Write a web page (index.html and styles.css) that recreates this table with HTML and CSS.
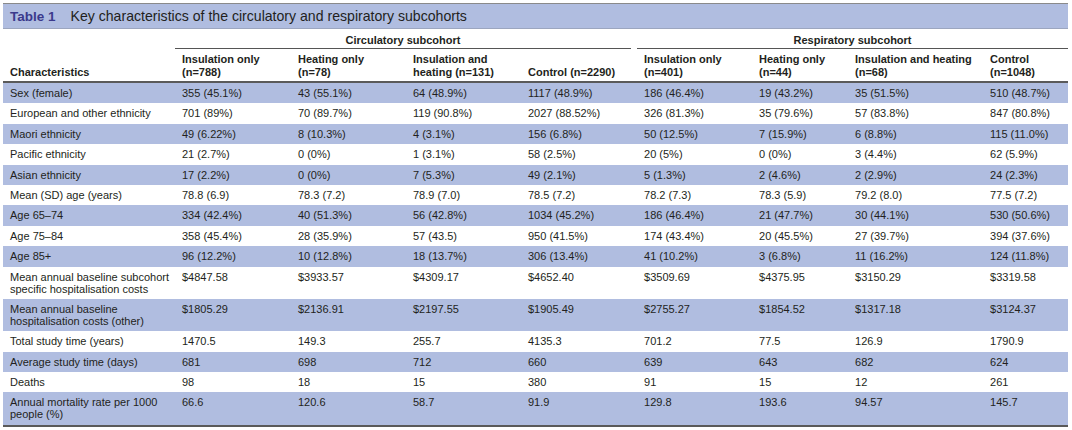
FILE: index.html
```html
<!DOCTYPE html>
<html lang="en">
<head>
<meta charset="utf-8">
<title>Table 1</title>
<link rel="stylesheet" href="styles.css">
</head>
<body>
<div class="wrap">
  <div class="title"><span class="label">Table 1</span>Key characteristics of the circulatory and respiratory subcohorts</div>
  <table class="tbl">
    <colgroup>
      <col class="c0"><col class="c1"><col class="c2"><col class="c3"><col class="c4"><col class="c5"><col class="c6"><col class="c7"><col class="c8">
    </colgroup>
    <thead>
      <tr class="grp-row">
        <th></th>
        <th colspan="4" class="grp"><div class="grp-line grp-left">Circulatory subcohort</div></th>
        <th colspan="4" class="grp"><div class="grp-line">Respiratory subcohort</div></th>
      </tr>
      <tr class="col-row">
        <th>Characteristics</th>
        <th>Insulation only<br>(n=788)</th>
        <th>Heating only (n=78)</th>
        <th>Insulation and<br>heating (n=131)</th>
        <th>Control (n=2290)</th>
        <th>Insulation only<br>(n=401)</th>
        <th>Heating only<br>(n=44)</th>
        <th>Insulation and heating<br>(n=68)</th>
        <th>Control<br>(n=1048)</th>
      </tr>
    </thead>
    <tbody>
      <tr class="alt"><td>Sex (female)</td><td>355 (45.1%)</td><td>43 (55.1%)</td><td>64 (48.9%)</td><td>1117 (48.9%)</td><td>186 (46.4%)</td><td>19 (43.2%)</td><td>35 (51.5%)</td><td>510 (48.7%)</td></tr>
      <tr><td>European and other ethnicity</td><td>701 (89%)</td><td>70 (89.7%)</td><td>119 (90.8%)</td><td>2027 (88.52%)</td><td>326 (81.3%)</td><td>35 (79.6%)</td><td>57 (83.8%)</td><td>847 (80.8%)</td></tr>
      <tr class="alt"><td>Maori ethnicity</td><td>49 (6.22%)</td><td>8 (10.3%)</td><td>4 (3.1%)</td><td>156 (6.8%)</td><td>50 (12.5%)</td><td>7 (15.9%)</td><td>6 (8.8%)</td><td>115 (11.0%)</td></tr>
      <tr><td>Pacific ethnicity</td><td>21 (2.7%)</td><td>0 (0%)</td><td>1 (3.1%)</td><td>58 (2.5%)</td><td>20 (5%)</td><td>0 (0%)</td><td>3 (4.4%)</td><td>62 (5.9%)</td></tr>
      <tr class="alt"><td>Asian ethnicity</td><td>17 (2.2%)</td><td>0 (0%)</td><td>7 (5.3%)</td><td>49 (2.1%)</td><td>5 (1.3%)</td><td>2 (4.6%)</td><td>2 (2.9%)</td><td>24 (2.3%)</td></tr>
      <tr><td>Mean (SD) age (years)</td><td>78.8 (6.9)</td><td>78.3 (7.2)</td><td>78.9 (7.0)</td><td>78.5 (7.2)</td><td>78.2 (7.3)</td><td>78.3 (5.9)</td><td>79.2 (8.0)</td><td>77.5 (7.2)</td></tr>
      <tr class="alt"><td>Age 65–74</td><td>334 (42.4%)</td><td>40 (51.3%)</td><td>56 (42.8%)</td><td>1034 (45.2%)</td><td>186 (46.4%)</td><td>21 (47.7%)</td><td>30 (44.1%)</td><td>530 (50.6%)</td></tr>
      <tr><td>Age 75–84</td><td>358 (45.4%)</td><td>28 (35.9%)</td><td>57 (43.5)</td><td>950 (41.5%)</td><td>174 (43.4%)</td><td>20 (45.5%)</td><td>27 (39.7%)</td><td>394 (37.6%)</td></tr>
      <tr class="alt"><td>Age 85+</td><td>96 (12.2%)</td><td>10 (12.8%)</td><td>18 (13.7%)</td><td>306 (13.4%)</td><td>41 (10.2%)</td><td>3 (6.8%)</td><td>11 (16.2%)</td><td>124 (11.8%)</td></tr>
      <tr><td>Mean annual baseline subcohort<br>specific hospitalisation costs</td><td>$4847.58</td><td>$3933.57</td><td>$4309.17</td><td>$4652.40</td><td>$3509.69</td><td>$4375.95</td><td>$3150.29</td><td>$3319.58</td></tr>
      <tr class="alt"><td>Mean annual baseline<br>hospitalisation costs (other)</td><td>$1805.29</td><td>$2136.91</td><td>$2197.55</td><td>$1905.49</td><td>$2755.27</td><td>$1854.52</td><td>$1317.18</td><td>$3124.37</td></tr>
      <tr><td>Total study time (years)</td><td>1470.5</td><td>149.3</td><td>255.7</td><td>4135.3</td><td>701.2</td><td>77.5</td><td>126.9</td><td>1790.9</td></tr>
      <tr class="alt"><td>Average study time (days)</td><td>681</td><td>698</td><td>712</td><td>660</td><td>639</td><td>643</td><td>682</td><td>624</td></tr>
      <tr><td>Deaths</td><td>98</td><td>18</td><td>15</td><td>380</td><td>91</td><td>15</td><td>12</td><td>261</td></tr>
      <tr class="alt"><td>Annual mortality rate per 1000<br>people (%)</td><td>66.6</td><td>120.6</td><td>58.7</td><td>91.9</td><td>129.8</td><td>193.6</td><td>94.57</td><td>145.7</td></tr>
    </tbody>
  </table>
</div>
</body>
</html>
```

FILE: styles.css
```css
html, body {
  margin: 0;
  padding: 0;
  background: #ffffff;
}

body {
  font-family: "Liberation Sans", Arial, Helvetica, sans-serif;
  color: #231f20;
}

.wrap {
  margin: 3px 0 0 3px;
  width: 1065px;
  border-top: 1px solid #8a8a8a;
}

.title {
  background: #b0bde0;
  height: 24px;
  line-height: 25px;
  padding-left: 7px;
  font-size: 14.1px;
  color: #231f20;
  border-bottom: 1px solid #9ca6bf;
}

.label {
  font-weight: bold;
  color: #3b3a8c;
  font-size: 13.5px;
  margin-right: 15px;
}

.tbl {
  width: 1065px;
  border-collapse: collapse;
  table-layout: fixed;
  font-size: 11px;
  line-height: 12px;
}

.c0 { width: 172px; }
.c1 { width: 116px; }
.c2 { width: 115px; }
.c3 { width: 115px; }
.c4 { width: 116px; }
.c5 { width: 115px; }
.c6 { width: 96px; }
.c7 { width: 135px; }
.c8 { width: 85px; }

.tbl th {
  font-weight: bold;
  text-align: left;
  color: #231f20;
}

.grp-row th {
  padding: 0;
  height: 20px;
  vertical-align: bottom;
}

.grp-line {
  text-align: center;
  padding: 5px 0 2px;
  border-bottom: 1px solid #555555;
}

.grp-left {
  margin-right: 6px;
}

.col-row th {
  padding: 4px 7px 2px;
  line-height: 13px;
  vertical-align: bottom;
  border-bottom: 2px solid #5a5a5a;
}

.tbl td {
  padding: 4px 7px 4.4px;
  vertical-align: top;
  white-space: nowrap;
}

.tbl tr.alt td {
  background: #b0bde0;
}

.tbl tbody tr:last-child td {
  border-bottom: 2px solid #5a5a5a;
}
```
